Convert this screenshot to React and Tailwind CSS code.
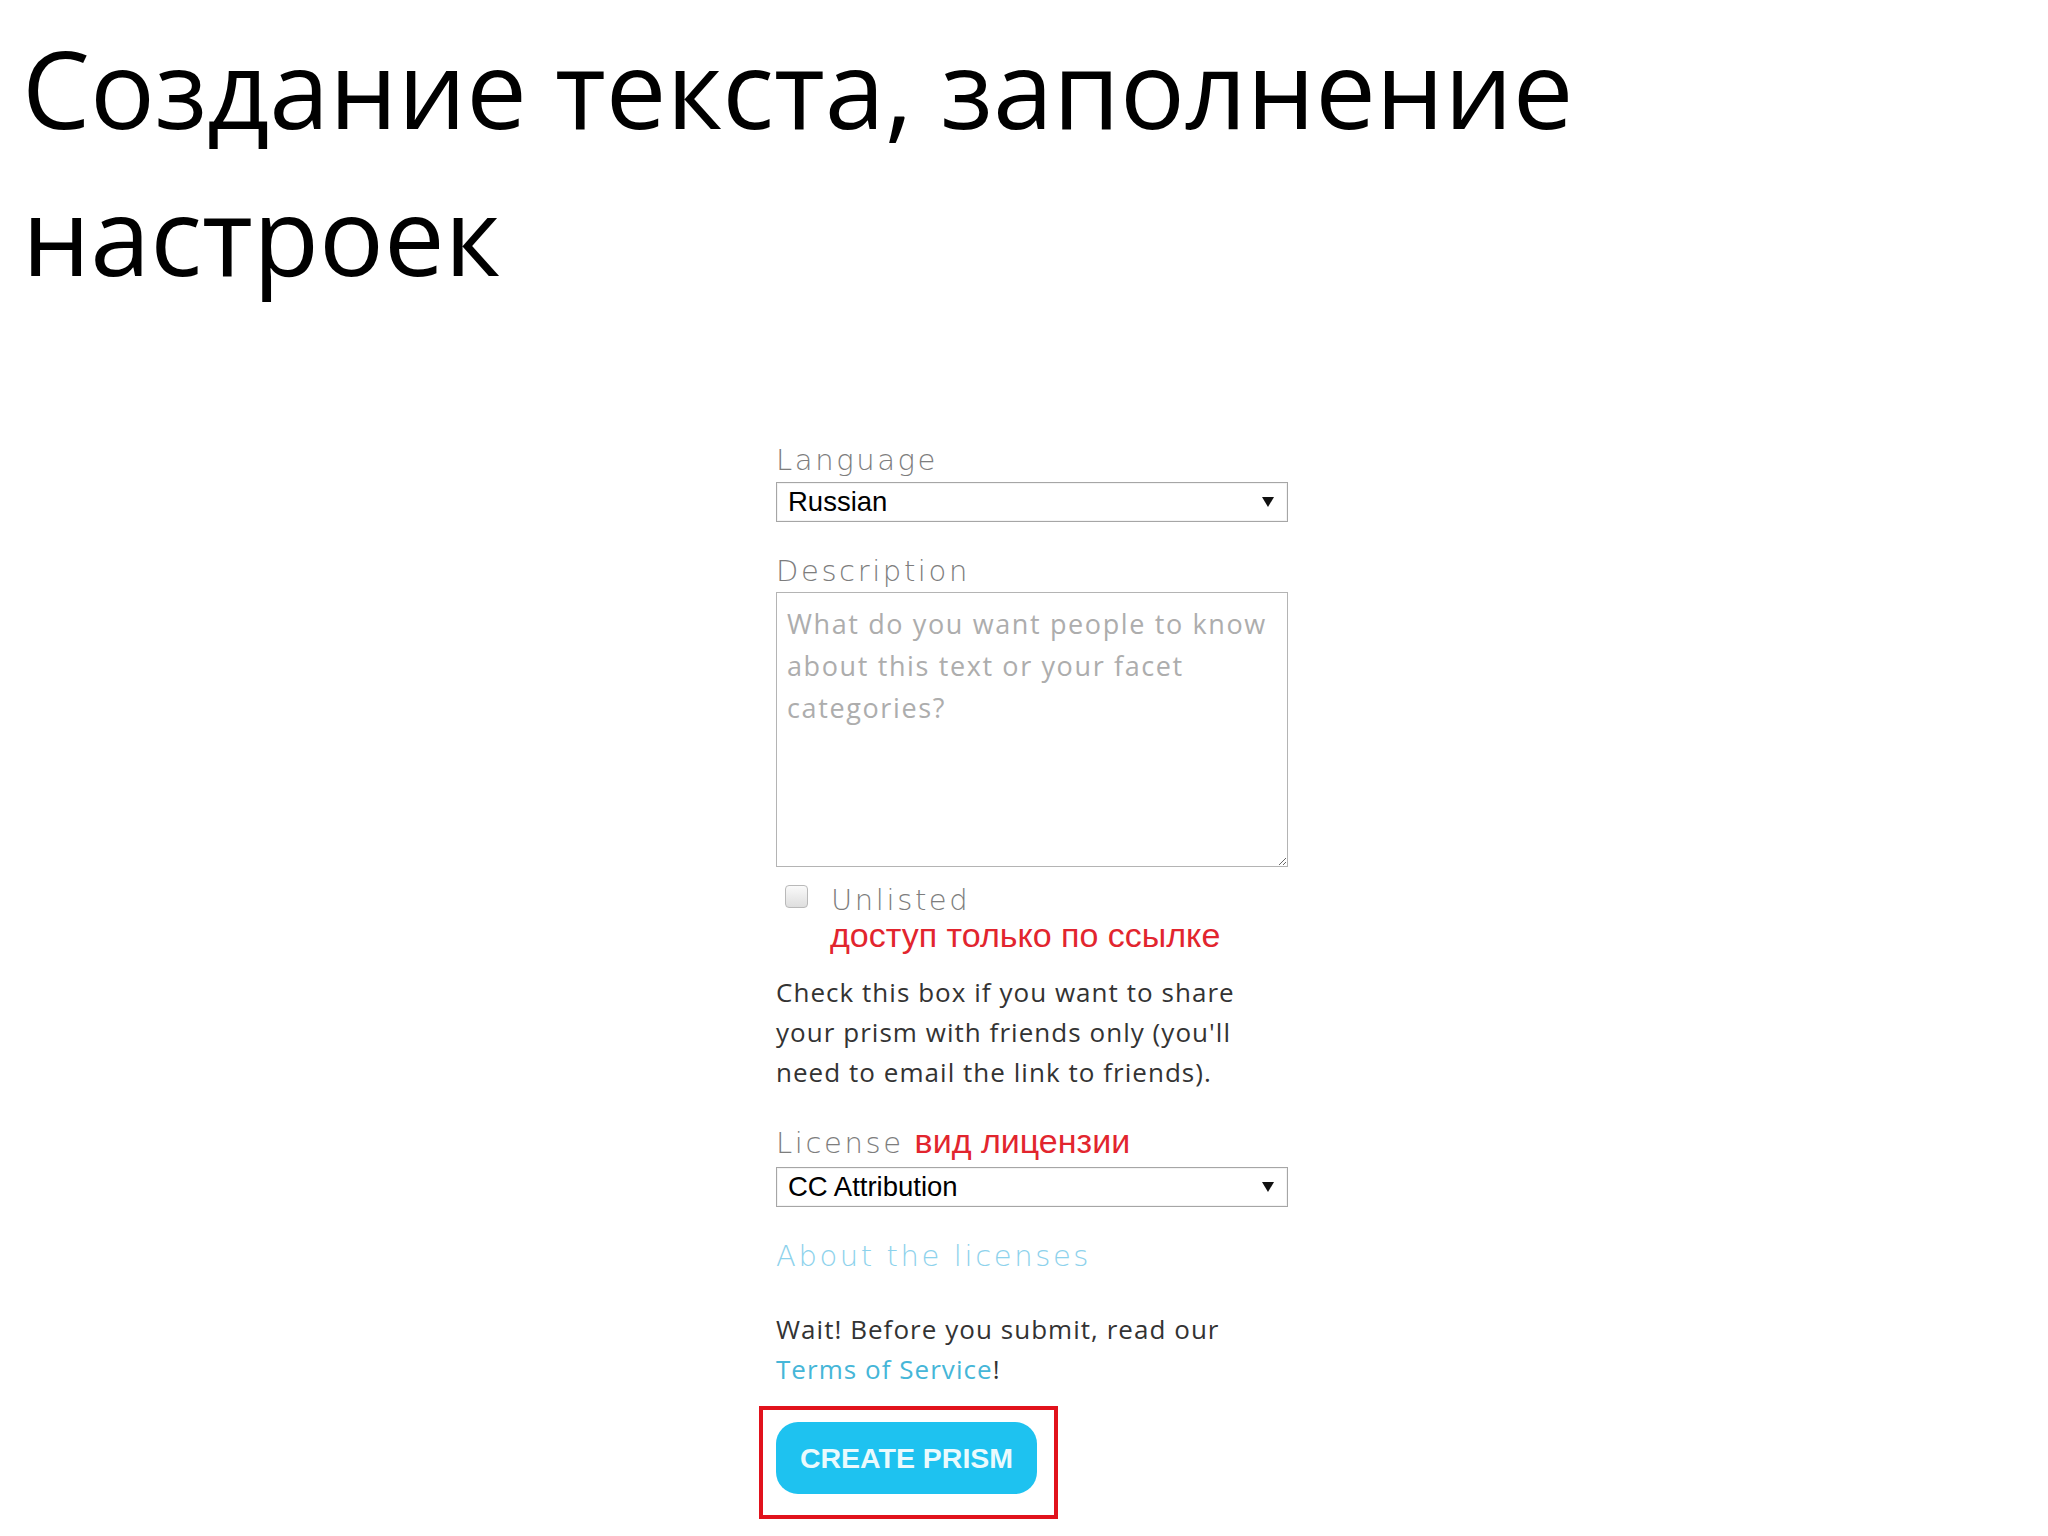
import React from "react";

const label = "font-['DejaVu_Sans',sans-serif] font-extralight text-[29px] leading-[36px] tracking-[0.09em] text-[#7d7d7d]";
const body = "font-['Open_Sans',sans-serif] text-[26px] leading-[40px] tracking-[0.04em] text-[#333]";
const red = "font-['Liberation_Sans',Arial,sans-serif] text-[34px] leading-[34px] text-[#e2252e]";

const Caret = () => (
  <svg width="12" height="10" viewBox="0 0 12 10" className="shrink-0">
    <path d="M0 0 L12 0 L6 10 Z" fill="#111" />
  </svg>
);

const FakeSelect = ({ value, className = "" }) => (
  <div
    className={`flex h-[40px] w-[512px] items-center justify-between border border-[#a6a6a6] bg-white pl-[11px] pr-[13px] shadow-[inset_0_0_0_1px_#f4f4f4] ${className}`}
  >
    <span className="font-['Liberation_Sans',Arial,sans-serif] text-[27.5px] leading-none text-black">
      {value}
    </span>
    <Caret />
  </div>
);

const App = () => {
  return (
    <div className="min-h-[1536px] w-[2048px] bg-white">

      <h1 className="pl-[22px] pt-[14px] font-['Open_Sans',sans-serif] text-[108px] font-normal leading-[147px] text-black">
        Создание текста, заполнение
        <br />
        настроек
      </h1>

      <form className="ml-[776px] mt-[134px] flex w-[512px] flex-col">

        <label className={label}>Language</label>
        <FakeSelect value="Russian" className="mt-[4px]" />

        <label className={`${label} mt-[31px]`}>Description</label>
        <textarea
          readOnly
          placeholder="What do you want people to know about this text or your facet categories?"
          className="mt-[3px] h-[275px] w-[512px] border border-[#b4b4b4] bg-white px-[10px] pt-[10px] font-['Open_Sans',sans-serif] text-[27px] leading-[42px] tracking-[0.06em] text-[#333] outline-none placeholder:text-[#adadad]"
        />

        <div className="mt-[15px] flex items-start">
          <div className="ml-[9px] mt-[3px] h-[23px] w-[23px] rounded-[4px] border border-[#b9b9b9] bg-gradient-to-b from-[#fafafa] to-[#dedede]" />
          <span className={`${label} ml-[23px]`}>Unlisted</span>
        </div>
        <div className={`${red} pl-[54px]`}>доступ только по ссылке</div>

        <p className={`${body} mt-[20px]`}>
          Check this box if you want to share
          <br />
          your prism with friends only (you'll
          <br />
          need to email the link to friends).
        </p>

        <div className="mt-[32px] flex items-baseline gap-[11px]">
          <label className={label}>License</label>
          <span className={red}>вид лицензии</span>
        </div>
        <FakeSelect value="CC Attribution" className="mt-[6px]" />

        <a className={`${label} mt-[31px] text-[#8dd2ec]`}>About the licenses</a>

        <p className={`${body} mt-[35px]`}>
          Wait! Before you submit, read our
          <br />
          <a className="text-[#45b6d8]">Terms of Service</a>!
        </p>

        <div className="-ml-[17px] mt-[17px] self-start border-4 border-[#e1121c] pb-[21px] pl-[13px] pr-[17px] pt-[12px]">
          <button
            type="button"
            className="flex h-[72px] w-[261px] items-center justify-center rounded-[22px] bg-[#1ec2f0] font-['Liberation_Sans',Arial,sans-serif] text-[28.5px] font-bold text-[#eafafd]"
          >
            CREATE PRISM
          </button>
        </div>

      </form>

    </div>
  );
};

export default App;
